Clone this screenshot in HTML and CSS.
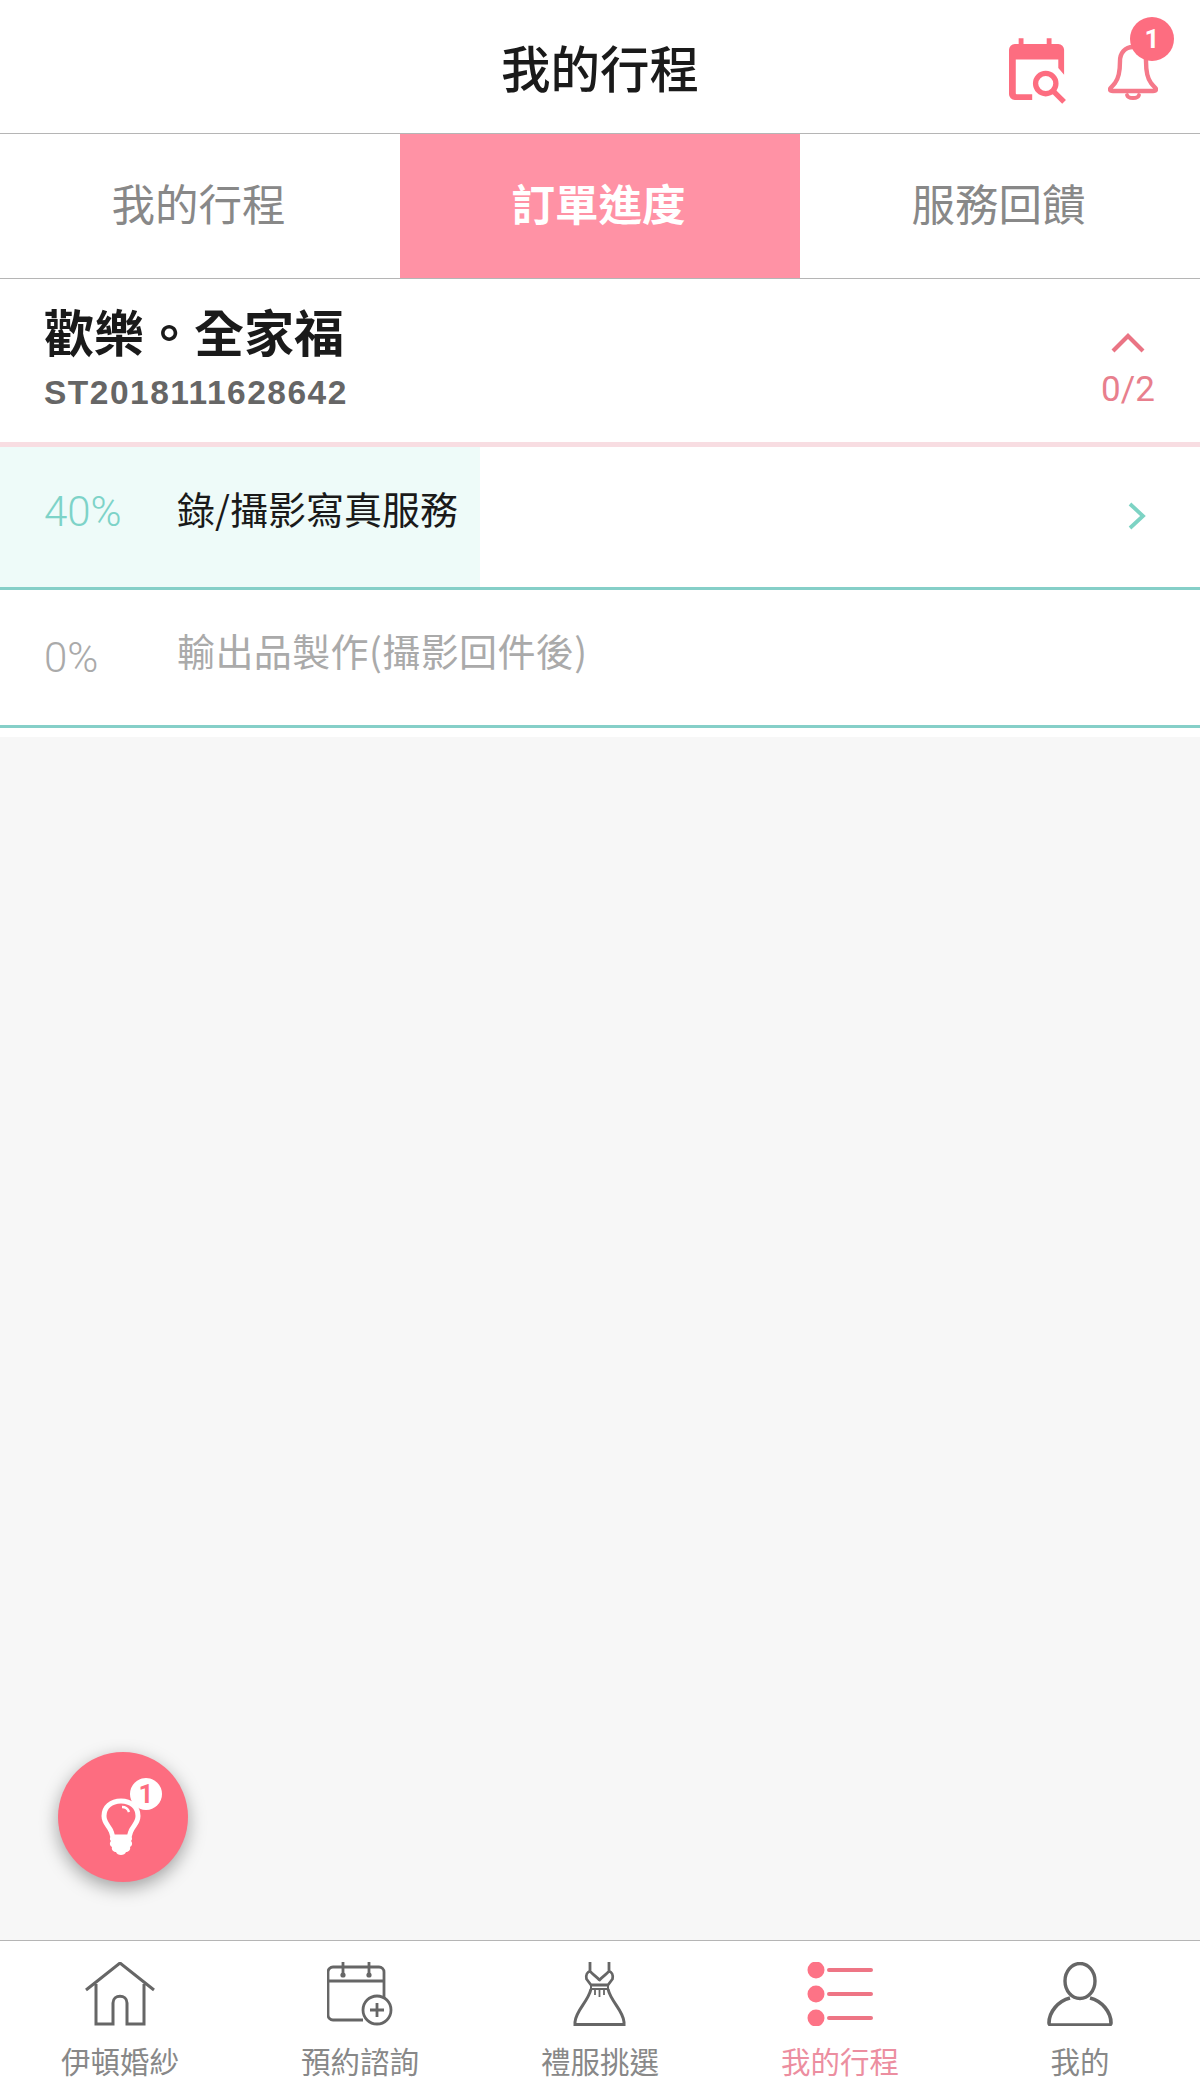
FILE: index.html
```html
<!DOCTYPE html>
<html lang="zh-Hant">
<head>
<meta charset="utf-8">
<title>我的行程</title>
<link rel="stylesheet" href="styles.css">
</head>
<body>
<div class="app">
  <header class="topbar">
    <h1 class="topbar-title">我的行程</h1>
    <div class="topbar-icons">
      <svg class="icon-cal-search" viewBox="0 0 60 68" aria-hidden="true">
        <path d="M10 0h5v6h24V0h5v6h7a6 6 0 0 1 6 6v26l-6-7V22H7v35a1 1 0 0 0 1 1h16v6H6a6 6 0 0 1-6-6V12a6 6 0 0 1 6-6h4z" fill="#fd6d80"/>
        <circle cx="38" cy="47" r="10.5" fill="none" stroke="#fd6d80" stroke-width="5.5"/>
        <path d="M46 55l9 9" stroke="#fd6d80" stroke-width="5.5" stroke-linecap="square"/>
      </svg>
      <div class="bell">
        <svg class="icon-bell" viewBox="0 0 50 56" aria-hidden="true">
          <path d="M25 3c-8 0-13 6-13 14 0 8-1 17-5 22-2 3-5 5-5 6 0 1 1 2 3 2h40c2 0 3-1 3-2 0-1-3-3-5-6-4-5-5-14-5-22 0-8-5-14-13-14z" fill="none" stroke="#f5798a" stroke-width="4.4" stroke-linejoin="round"/>
          <path d="M19 51c1 4 11 4 12 0" fill="none" stroke="#f5798a" stroke-width="3.8" stroke-linecap="round"/>
        </svg>
        <span class="badge">1</span>
      </div>
    </div>
  </header>

  <nav class="tabs">
    <div class="tab">我的行程</div>
    <div class="tab tab-active">訂單進度</div>
    <div class="tab">服務回饋</div>
  </nav>

  <section class="order">
    <div class="order-info">
      <div class="order-name">歡樂。全家福</div>
      <div class="order-no">ST2018111628642</div>
    </div>
    <div class="order-toggle">
      <svg class="icon-up" viewBox="0 0 34 20" aria-hidden="true"><path d="M2 18L17 3l15 15" fill="none" stroke="#ea7484" stroke-width="4.2"/></svg>
      <span class="order-count">0/2</span>
    </div>
  </section>

  <section class="rows">
    <div class="row row-current">
      <div class="row-fill" style="width:40%"></div>
      <span class="row-pct">40%</span>
      <span class="row-name">錄/攝影寫真服務</span>
      <svg class="icon-next" viewBox="0 0 18 28" aria-hidden="true"><path d="M2 2l13 12L2 26" fill="none" stroke="#7dd3c4" stroke-width="3.8"/></svg>
    </div>
    <div class="row row-todo">
      <span class="row-pct">0%</span>
      <span class="row-name">輸出品製作(攝影回件後)</span>
    </div>
  </section>

  <main class="empty"></main>

  <button class="fab" type="button">
    <svg class="icon-bulb" viewBox="0 0 40 60" aria-hidden="true">
      <path d="M20 3C10 3 3 9 3 18c0 7 5 10 7 15 1 2 1 4 2 6h16c1-2 1-4 2-6 2-5 7-8 7-15 0-9-7-15-17-15z" fill="none" stroke="#fff" stroke-width="5"/>
      <path d="M12 38h16c3 0 4 3 2 5 2 2 1 5-1 6 1 3-2 5-4 5-1 4-9 4-10 0-2 0-5-2-4-5-2-1-3-4-1-6-2-2-1-5 2-5z" fill="#fff"/>
      <path d="M21 9c3 0 6 2 7 5" fill="none" stroke="#fff" stroke-width="2.4"/>
    </svg>
    <span class="fab-badge">1</span>
  </button>

  <footer class="tabbar">
    <div class="tabbar-item">
      <svg class="tabbar-icon" viewBox="0 0 70 64" aria-hidden="true">
        <path d="M1 28L35 1l34 27M11 22v40h17V41c0-9 14-9 14 0v21h17V22" fill="none" stroke="#666" stroke-width="3"/>
      </svg>
      <span>伊頓婚紗</span>
    </div>
    <div class="tabbar-item">
      <svg class="tabbar-icon" viewBox="0 0 66 64" aria-hidden="true">
        <path d="M36 58H6a5 5 0 0 1-5-5V10a5 5 0 0 1 5-5h46a5 5 0 0 1 5 5v26" fill="none" stroke="#666" stroke-width="2.8"/>
        <path d="M1 19h56M16 0v13M42 0v13" fill="none" stroke="#666" stroke-width="2.8"/>
        <circle cx="16" cy="13" r="2.6" fill="#666"/>
        <circle cx="42" cy="13" r="2.6" fill="#666"/>
        <circle cx="50" cy="48" r="14" fill="#fff" stroke="#666" stroke-width="2.8"/>
        <path d="M50 41v14M43 48h14" stroke="#666" stroke-width="2.8"/>
      </svg>
      <span>預約諮詢</span>
    </div>
    <div class="tabbar-item">
      <svg class="tabbar-icon" viewBox="0 0 54 64" aria-hidden="true">
        <path d="M17 0v9M36 0v9M17 9C14.500 10 12.500 13 13.500 17L18 23H35L39.500 17C40.500 13 38.500 10 36 9 34 12 30 14 26.500 18 23 14 19 12 17 9Z" fill="none" stroke="#666" stroke-width="2.800" stroke-linejoin="round"/>
        <path d="M18 23h17v4H18z" fill="none" stroke="#666" stroke-width="2"/>
        <path d="M18 27C15 40 3 48 2 60v2.500h49V60C50 48 38 40 35 27" fill="none" stroke="#666" stroke-width="3"/>
        <path d="M22 27v6M26.500 27v8M31 27v6" fill="none" stroke="#666" stroke-width="1.800"/>
      </svg>
      <span>禮服挑選</span>
    </div>
    <div class="tabbar-item tabbar-active">
      <svg class="tabbar-icon" viewBox="0 0 66 64" aria-hidden="true">
        <circle cx="9" cy="8" r="8.5" fill="#fd7386"/>
        <circle cx="9" cy="32" r="8.5" fill="#fd7386"/>
        <circle cx="9" cy="56" r="8.5" fill="#fd7386"/>
        <path d="M22 8h42M22 32h42M22 56h42" stroke="#ee7585" stroke-width="4" stroke-linecap="round"/>
      </svg>
      <span>我的行程</span>
    </div>
    <div class="tabbar-item">
      <svg class="tabbar-icon" viewBox="0 0 66 64" aria-hidden="true">
        <ellipse cx="33" cy="19" rx="15" ry="17.5" fill="none" stroke="#666" stroke-width="3.4"/>
        <path d="M23 36C11 39 2 50 2 61c0 1 1 2 2 2h58c1 0 2-1 2-2 0-11-9-22-21-25" fill="none" stroke="#666" stroke-width="3.6"/>
      </svg>
      <span>我的</span>
    </div>
  </footer>
</div>
</body>
</html>
```

FILE: styles.css
```css
* { box-sizing: border-box; }

html, body { margin: 0; padding: 0; }

body {
  font-family: "Noto Sans CJK TC", "Noto Sans", sans-serif;
  background: #fff;
  color: #111;
}

.app {
  position: relative;
  display: flex;
  flex-direction: column;
  width: 1200px;
  height: 2082px;
  overflow: hidden;
}

.topbar {
  position: relative;
  flex: 0 0 134px;
  display: flex;
  align-items: center;
  justify-content: center;
  border-bottom: 1px solid #b5b5b5;
}

.topbar-title {
  margin: 0;
  font-size: 49.5px;
  line-height: 60px;
  font-weight: 500;
  color: #1a1a1a;
}

.topbar-icons {
  position: absolute;
  left: 1009px;
  top: 16px;
  display: flex;
  align-items: flex-start;
  gap: 41px;
}

.icon-cal-search {
  width: 58px;
  height: 68px;
  margin-top: 21px;
}

.bell { position: relative; width: 50px; height: 88px; }

.icon-bell {
  position: absolute;
  left: 0;
  top: 28px;
  width: 50px;
  height: 56px;
}

.badge {
  position: absolute;
  left: 22px;
  top: 1px;
  width: 44px;
  height: 44px;
  border-radius: 50%;
  background: #fd6d80;
  color: #fff;
  font: 700 26px/44px Roboto, sans-serif;
  text-align: center;
}

.tabs {
  flex: 0 0 145px;
  display: flex;
  border-bottom: 1px solid #b5b5b5;
}

.tab {
  flex: 1;
  display: flex;
  align-items: center;
  justify-content: center;
  padding: 0 3px 8px 0;
  font-size: 43.5px;
  color: #888;
}

.tab-active {
  background: #ff92a5;
  color: #fff;
  font-weight: 700;
}

.order {
  flex: 0 0 168px;
  display: flex;
  justify-content: space-between;
  padding: 18px 45px 0 44px;
  border-bottom: 5px solid #f8dde2;
}

.order-name {
  font-size: 50px;
  line-height: 66px;
  font-weight: 700;
  color: #1a1a1a;
}

.order-no {
  margin-top: 9px;
  font: 700 33.5px/42px "Liberation Sans", sans-serif;
  letter-spacing: 1.5px;
  color: #666;
}

.order-toggle {
  display: flex;
  flex-direction: column;
  align-items: center;
  padding-top: 36px;
  width: 54px;
}

.icon-up { width: 34px; height: 20px; }

.order-count {
  margin-top: 16px;
  font: 400 35px/42px Roboto, sans-serif;
  color: #e87f8d;
}

.rows { flex: none; padding-bottom: 9px; background: #fff; }

.row {
  position: relative;
  display: flex;
  align-items: center;
  padding-left: 44px;
  border-bottom: 3.500px solid #85cfc8;
}

.row-current { height: 143px; padding-bottom: 10px; }
.row-todo { height: 138px; padding-bottom: 8px; }

.row-fill {
  position: absolute;
  left: 0;
  top: 0;
  bottom: 0;
  background: #eefbf9;
}

.row-pct {
  position: relative;
  width: 133px;
  font: 300 42px/48px Roboto, sans-serif;
}

.row-name {
  position: relative;
  top: -4px;
  font-size: 38px;
  line-height: 50px;
  white-space: nowrap;
}

.row-current .row-pct { color: #7dd3c8; }
.row-current .row-name { color: #1a1a1a; }
.row-todo .row-pct { color: #aaa; top: 4px; }
.row-todo .row-name { color: #aaa; letter-spacing: 0.4px; }

.icon-next {
  position: absolute;
  left: 1128px;
  top: 55px;
  width: 18px;
  height: 28px;
}

.empty { flex: 1; background: #f7f7f7; }

.fab {
  position: absolute;
  left: 58px;
  top: 1752px;
  width: 130px;
  height: 130px;
  padding: 0;
  border: 0;
  border-radius: 50%;
  background: #fd6d80;
  box-shadow: 0 6px 18px rgba(0, 0, 0, 0.35);
}

.icon-bulb {
  position: absolute;
  left: 43px;
  top: 46px;
  width: 40px;
  height: 60px;
}

.fab-badge {
  position: absolute;
  left: 72px;
  top: 26px;
  width: 32px;
  height: 32px;
  border-radius: 50%;
  background: #fff;
  color: #fd6d80;
  font: 700 26px/32px Roboto, sans-serif;
  text-align: center;
}

.tabbar {
  flex: 0 0 142px;
  display: flex;
  border-top: 1px solid #b5b5b5;
  background: #fff;
}

.tabbar-item {
  flex: 1;
  display: flex;
  flex-direction: column;
  align-items: center;
  padding-top: 21px;
  font-size: 29.5px;
  line-height: 40px;
  color: #888;
}

.tabbar-item span { margin-top: 14px; }

.tabbar-icon { height: 64px; display: block; }

.tabbar-active { color: #ec8ea0; }
```
